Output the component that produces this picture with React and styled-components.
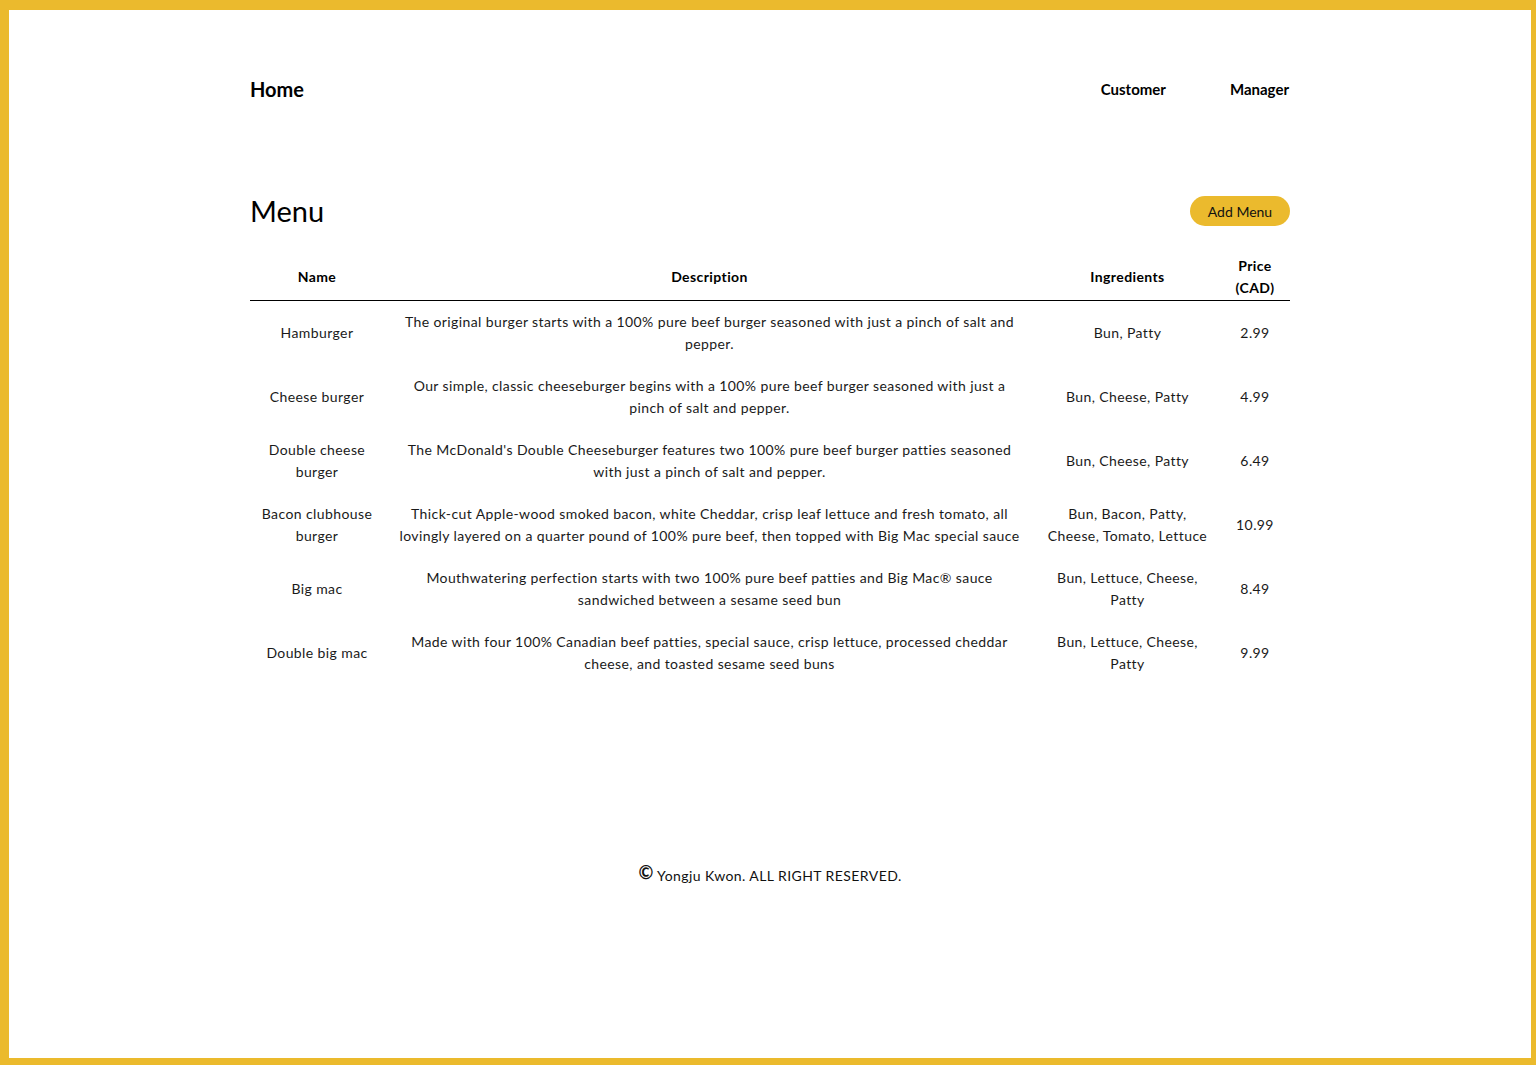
import React from 'react';
import { styled, createGlobalStyle } from 'styled-components';

const menus = [
  {
    name: 'Hamburger',
    description:
      'The original burger starts with a 100% pure beef burger seasoned with just a pinch of salt and pepper.',
    ingredients: 'Bun, Patty',
    price: '2.99',
  },
  {
    name: 'Cheese burger',
    description:
      'Our simple, classic cheeseburger begins with a 100% pure beef burger seasoned with just a pinch of salt and pepper.',
    ingredients: 'Bun, Cheese, Patty',
    price: '4.99',
  },
  {
    name: 'Double cheese burger',
    description:
      "The McDonald's Double Cheeseburger features two 100% pure beef burger patties seasoned with just a pinch of salt and pepper.",
    ingredients: 'Bun, Cheese, Patty',
    price: '6.49',
  },
  {
    name: 'Bacon clubhouse burger',
    description:
      'Thick-cut Apple-wood smoked bacon, white Cheddar, crisp leaf lettuce and fresh tomato, all lovingly layered on a quarter pound of 100% pure beef, then topped with Big Mac special sauce',
    ingredients: 'Bun, Bacon, Patty, Cheese, Tomato, Lettuce',
    price: '10.99',
  },
  {
    name: 'Big mac',
    description:
      'Mouthwatering perfection starts with two 100% pure beef patties and Big Mac® sauce sandwiched between a sesame seed bun',
    ingredients: 'Bun, Lettuce, Cheese, Patty',
    price: '8.49',
  },
  {
    name: 'Double big mac',
    description:
      'Made with four 100% Canadian beef patties, special sauce, crisp lettuce, processed cheddar cheese, and toasted sesame seed buns',
    ingredients: 'Bun, Lettuce, Cheese, Patty',
    price: '9.99',
  },
];

export default function App() {
  return (
    <>
      <GlobalStyle />
      <Frame>
        <Container>
          <Header>
            <HomeLink>Home</HomeLink>
            <Nav>
              <NavLink>Customer</NavLink>
              <NavLink>Manager</NavLink>
            </Nav>
          </Header>

          <TitleRow>
            <Title>Menu</Title>
            <AddButton>Add Menu</AddButton>
          </TitleRow>

          <Table>
            <colgroup>
              <col style={{ width: 134 }} />
              <col style={{ width: 651 }} />
              <col style={{ width: 185 }} />
              <col style={{ width: 70 }} />
            </colgroup>
            <thead>
              <tr>
                <Th>Name</Th>
                <Th>Description</Th>
                <Th>Ingredients</Th>
                <Th narrow>Price (CAD)</Th>
              </tr>
            </thead>
            <tbody>
              {menus.map((m) => (
                <tr key={m.name}>
                  <Td>{m.name}</Td>
                  <Td>{m.description}</Td>
                  <Td>{m.ingredients}</Td>
                  <Td>{m.price}</Td>
                </tr>
              ))}
            </tbody>
          </Table>

          <Footer>
            <Copy>©</Copy> Yongju Kwon. ALL RIGHT RESERVED.
          </Footer>
        </Container>
      </Frame>
    </>
  );
}

const GlobalStyle = createGlobalStyle`
  html, body {
    margin: 0;
    padding: 0;
    background: #ebba2d;
  }
  body {
    font-family: Lato, "Open Sans", "Liberation Sans", sans-serif;
    color: #111;
  }
`;

const Frame = styled.div`
  margin: 10px 5px 7px 9px;
  height: 1048px;
  background: #fff;
`;

const Container = styled.div`
  width: 1040px;
  margin: 0 auto;
`;

const Header = styled.header`
  display: flex;
  align-items: center;
  justify-content: space-between;
  height: 48px;
  padding-top: 55px;
`;

const HomeLink = styled.div`
  font-size: 20px;
  font-weight: 700;
  color: #000;
`;

const Nav = styled.nav`
  display: flex;
  gap: 64px;
  padding-right: 1px;
`;

const NavLink = styled.div`
  font-size: 15px;
  font-weight: 700;
  color: #000;
`;

const TitleRow = styled.div`
  display: flex;
  align-items: center;
  justify-content: space-between;
  height: 36px;
  margin-top: 80px;
`;

const Title = styled.h1`
  margin: 0;
  font-size: 29px;
  font-weight: 400;
  color: #000;
  position: relative;
  top: -1px;
`;

const AddButton = styled.button`
  width: 100px;
  height: 30px;
  border: none;
  border-radius: 15px;
  background: #ebba2d;
  color: #111;
  font-family: inherit;
  font-size: 14px;
  cursor: pointer;
`;

const Table = styled.table`
  width: 100%;
  margin-top: 26px;
  border-collapse: collapse;
  table-layout: fixed;
`;

const Th = styled.th`
  height: 44px;
  padding: 0 ${(p) => (p.narrow ? '14px' : '10px')} 1px;
  font-size: 14px;
  font-weight: 700;
  line-height: 22px;
  letter-spacing: 0.4px;
  color: #000;
  text-align: center;
  vertical-align: middle;
  border-bottom: 1px solid #000;
`;

const Td = styled.td`
  height: 64px;
  padding: 0 10px;
  font-size: 14px;
  line-height: 22px;
  letter-spacing: 0.4px;
  color: #1a1a1a;
  text-align: center;
  vertical-align: middle;
`;

const Footer = styled.footer`
  margin-top: 178px;
  text-align: center;
  font-size: 14px;
  line-height: 22px;
  letter-spacing: 0.42px;
  color: #111;
`;

const Copy = styled.span`
  font-size: 18px;
  font-weight: 700;
  position: relative;
  top: -2px;
`;
